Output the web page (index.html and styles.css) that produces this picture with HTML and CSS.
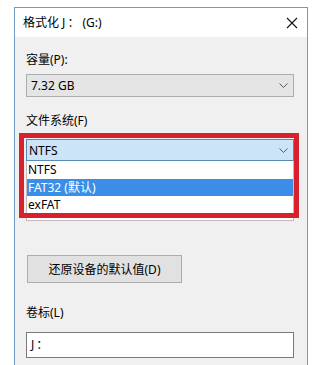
FILE: index.html
```html
<!DOCTYPE html>
<html lang="zh-CN">
<head>
<meta charset="utf-8">
<link rel="stylesheet" href="styles.css">
</head>
<body>
<div class="window">
  <div class="titlebar">
    <span class="title">格式化 J<span class="fw">：</span>(G:)</span>
    <svg class="close" width="12" height="12" viewBox="0 0 12 12"><path d="M1 1 L11 11 M11 1 L1 11" stroke="#111" stroke-width="1.1" fill="none"/></svg>
  </div>
  <div class="content">
    <div class="label">容量(P):</div>
    <div class="combo gray">
      <span>7.32 GB</span>
      <svg class="chev" width="9" height="5" viewBox="0 0 9 5"><path d="M0.5 0.5 L4.5 4.5 L8.5 0.5" stroke="#5a5a5a" fill="none"/></svg>
    </div>
    <div class="label fs">文件系统(F)</div>
    <div class="dropwrap">
      <div class="combo open">
        <span>NTFS</span>
        <svg class="chev" width="9" height="5" viewBox="0 0 9 5"><path d="M0.5 0.5 L4.5 4.5 L8.5 0.5" stroke="#5a5a5a" fill="none"/></svg>
      </div>
      <div class="list">
        <div class="item">NTFS</div>
        <div class="item sel">FAT32 (默认)</div>
        <div class="item">exFAT</div>
      </div>
      <div class="redframe"></div>
    </div>
    <button class="btn">还原设备的默认值(D)</button>
    <div class="label vol">卷标(L)</div>
    <div class="input">J<span class="fw">：</span></div>
  </div>
</div>
</body>
</html>
```

FILE: styles.css
```css
html, body {
  margin: 0;
  padding: 0;
  background: #ffffff;
}
body {
  font-family: "Noto Sans", "Noto Sans CJK SC", sans-serif;
  font-size: 12px;
  color: #000;
  padding-top: 7px;
  padding-left: 14px;
  height: 358px;
  overflow: hidden;
}
.window {
  width: 294px;
  height: 360px;
  box-sizing: border-box;
  border: 1px solid #6f9cc6;
  border-bottom: none;
  display: flex;
  flex-direction: column;
}
.titlebar {
  height: 29px;
  background: #fff;
  display: flex;
  align-items: center;
  justify-content: space-between;
  padding: 0 9px 0 8px;
}
.title {
  font-size: 12px;
  line-height: 16px;
}
.fw {
  padding: 0 3px 0 2px;
}
.close {
  display: block;
}
.content {
  flex: 1;
  background: #f0f0f0;
  padding: 15px 11px 0 11px;
  display: flex;
  flex-direction: column;
  align-items: flex-start;
}
.label {
  line-height: 16px;
  height: 16px;
}
.combo {
  width: 268px;
  box-sizing: border-box;
  display: flex;
  align-items: center;
  justify-content: space-between;
  padding: 0 5px 0 4px;
}
.combo.gray {
  margin-top: 6px;
  height: 23px;
  background: #e5e5e5;
  border: 1px solid #adadad;
}
.label.fs {
  margin-top: 16px;
}
.dropwrap {
  position: relative;
  margin-top: 10px;
  width: 268px;
}
.combo.open {
  height: 22px;
  background: #cce4f7;
  border: 1px solid #5a8bb5;
  padding-left: 2px;
}
.list {
  width: 268px;
  box-sizing: border-box;
  background: #fff;
  border: 1px solid #c7b9bd;
  border-top: none;
  padding-bottom: 6px;
}
.item {
  height: 17.5px;
  line-height: 17px;
  padding-left: 1px;
}
.item.sel {
  background: #3a8ee6;
  color: #fff;
}
.redframe {
  position: absolute;
  left: -7px;
  top: -6px;
  width: 280px;
  height: 85px;
  box-sizing: border-box;
  border: 5px solid #d7222d;
}
.btn {
  margin-top: 34px;
  margin-left: 1px;
  width: 155px;
  height: 28px;
  box-sizing: border-box;
  background: #e1e1e1;
  border: 1px solid #adadad;
  font-family: "Noto Sans", "Noto Sans CJK SC", sans-serif;
  font-size: 12px;
  color: #000;
  padding: 0;
}
.label.vol {
  margin-top: 22px;
}
.input {
  margin-top: 11px;
  width: 268px;
  height: 26px;
  box-sizing: border-box;
  background: #fff;
  border: 1px solid #7a7a7a;
  padding-left: 4px;
  line-height: 24px;
}
```
